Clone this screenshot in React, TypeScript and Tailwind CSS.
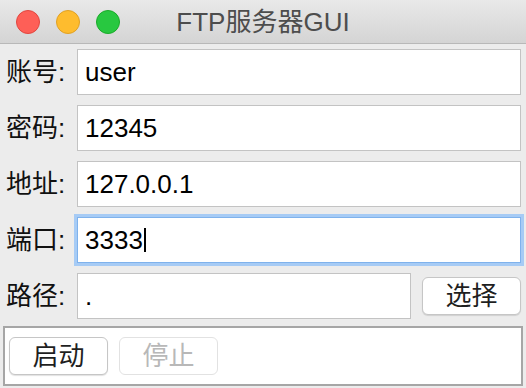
import React from "react";

const font = "font-['Liberation_Sans','Noto_Sans_CJK_SC',sans-serif]";

function Field({ label, value, focused }: { label: string; value: string; focused?: boolean }) {
  return (
    <div className="flex items-center h-[46px]">
      <div className="w-[77px] shrink-0 pl-[6px] text-[26px] text-[#111]">{label}</div>
      <div
        className={
          focused
            ? "flex-1 h-[46px] flex items-center bg-white border border-[#7fb2ec] shadow-[0_0_0_3px_#a6cbf5] pl-[7px] text-[26px] text-black"
            : "flex-1 h-[46px] flex items-center bg-white border border-[#c3c3c3] pl-[7px] text-[26px] text-black"
        }
      >
        {value}
        {focused && <span className="ml-[1px] w-[2px] h-[24px] bg-black" />}
      </div>
    </div>
  );
}

export default function App() {
  return (
    <div className={`w-[526px] h-[388px] bg-[#ececec] overflow-hidden ${font}`}>
      {/* Title bar */}
      <div className="relative h-[44px] flex items-center justify-center bg-gradient-to-b from-[#e9e9e9] to-[#d4d4d4] border-b border-[#b8b8b8]">
        <div className="absolute left-[16px] top-[10px] flex gap-[16px]">
          <span className="w-[24px] h-[24px] rounded-full bg-[#fe5f57] border border-[#e2463f]" />
          <span className="w-[24px] h-[24px] rounded-full bg-[#febc2e] border border-[#e1a123]" />
          <span className="w-[24px] h-[24px] rounded-full bg-[#28c840] border border-[#1aab29]" />
        </div>
        <span className="text-[26px] text-[#4d4d4d] leading-none">FTP服务器GUI</span>
      </div>

      {/* Form */}
      <div className="pt-[5px] pr-[5px] flex flex-col gap-[10px]">
        <Field label="账号:" value="user" />
        <Field label="密码:" value="12345" />
        <Field label="地址:" value="127.0.0.1" />
        <Field label="端口:" value="3333" focused />
        <div className="flex items-center h-[46px]">
          <div className="w-[77px] shrink-0 pl-[6px] text-[26px] text-[#111]">路径:</div>
          <div className="w-[334px] shrink-0 h-[46px] flex items-center bg-white border border-[#c3c3c3] pl-[7px] text-[26px] text-black">
            .
          </div>
          <button className="ml-[11px] w-[99px] shrink-0 h-[38px] rounded-[6px] bg-white border border-[#c6c6c6] shadow-[0_1px_1px_rgba(0,0,0,0.12)] text-[26px] text-[#1f1f1f] leading-none">
            选择
          </button>
        </div>
      </div>

      {/* Bottom frame */}
      <div className="mt-[7px] mx-[3px] h-[60px] bg-white border-2 border-[#a6a6a6] flex items-center gap-[11px] px-[4px]">
        <button className="w-[99px] h-[38px] rounded-[6px] bg-white border border-[#c6c6c6] shadow-[0_1px_1px_rgba(0,0,0,0.12)] text-[26px] text-[#1f1f1f] leading-none">
          启动
        </button>
        <button className="w-[99px] h-[38px] rounded-[6px] bg-white border border-[#e2e2e2] text-[26px] text-[#b8b8b8] leading-none">
          停止
        </button>
      </div>
    </div>
  );
}
